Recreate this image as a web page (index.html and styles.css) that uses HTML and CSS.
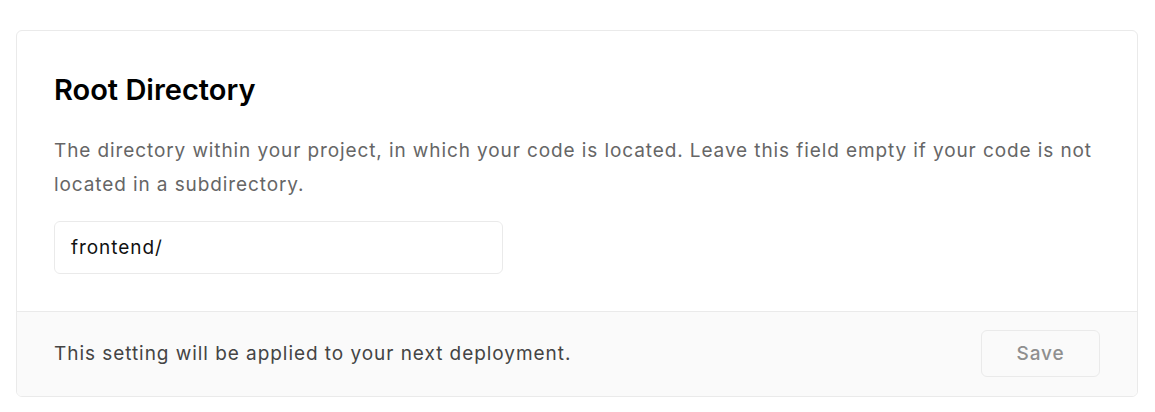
FILE: index.html
```html
<!DOCTYPE html>
<html lang="en">
<head>
<meta charset="utf-8">
<title>Root Directory</title>
<link rel="stylesheet" href="styles.css">
</head>
<body>
<section class="card">
  <div class="card-body">
    <h2 class="title">Root Directory</h2>
    <p class="desc">The directory within your project, in which your code is located. Leave this field empty if your code is not located in a subdirectory.</p>
    <div class="field">frontend/</div>
  </div>
  <footer class="card-footer">
    <p class="note">This setting will be applied to your next deployment.</p>
    <button class="save" type="button">Save</button>
  </footer>
</section>
</body>
</html>
```
FILE: styles.css
```css
html, body {
  margin: 0;
  padding: 0;
  background: #ffffff;
}
body {
  padding: 30px 17px 0 16px;
  font-family: "Inter", "Noto Sans", sans-serif;
}
.card {
  border: 1px solid #eaeaea;
  border-radius: 6px;
  overflow: hidden;
  background: #fff;
}
.card-body {
  padding: 41px 37px 37px 37px;
}
.title {
  margin: 0;
  font-size: 29px;
  line-height: 36px;
  font-weight: 600;
  color: #000;
}
.desc {
  margin: 26px 0 19px 0;
  font-size: 19px;
  line-height: 34px;
  color: #666;
  letter-spacing: 0.9px;
}
.field {
  width: 449px;
  height: 53px;
  box-sizing: border-box;
  border: 1px solid #eaeaea;
  border-radius: 6px;
  padding: 0 16px;
  display: flex;
  align-items: center;
  font-size: 19px;
  color: #111;
  letter-spacing: 0.95px;
}
.card-footer {
  border-top: 1px solid #eaeaea;
  background: #fafafa;
  padding: 18px 37px 19px 37px;
  display: flex;
  align-items: center;
  justify-content: space-between;
}
.note {
  margin: 0;
  font-size: 19px;
  line-height: 30px;
  color: #444;
  letter-spacing: 0.95px;
}
.save {
  width: 119px;
  height: 47px;
  border: 1px solid #eaeaea;
  border-radius: 6px;
  background: #fafafa;
  color: #8f8f8f;
  font-family: inherit;
  font-size: 19px;
  font-weight: 500;
  padding: 0;
  letter-spacing: 0.9px;
}
```
